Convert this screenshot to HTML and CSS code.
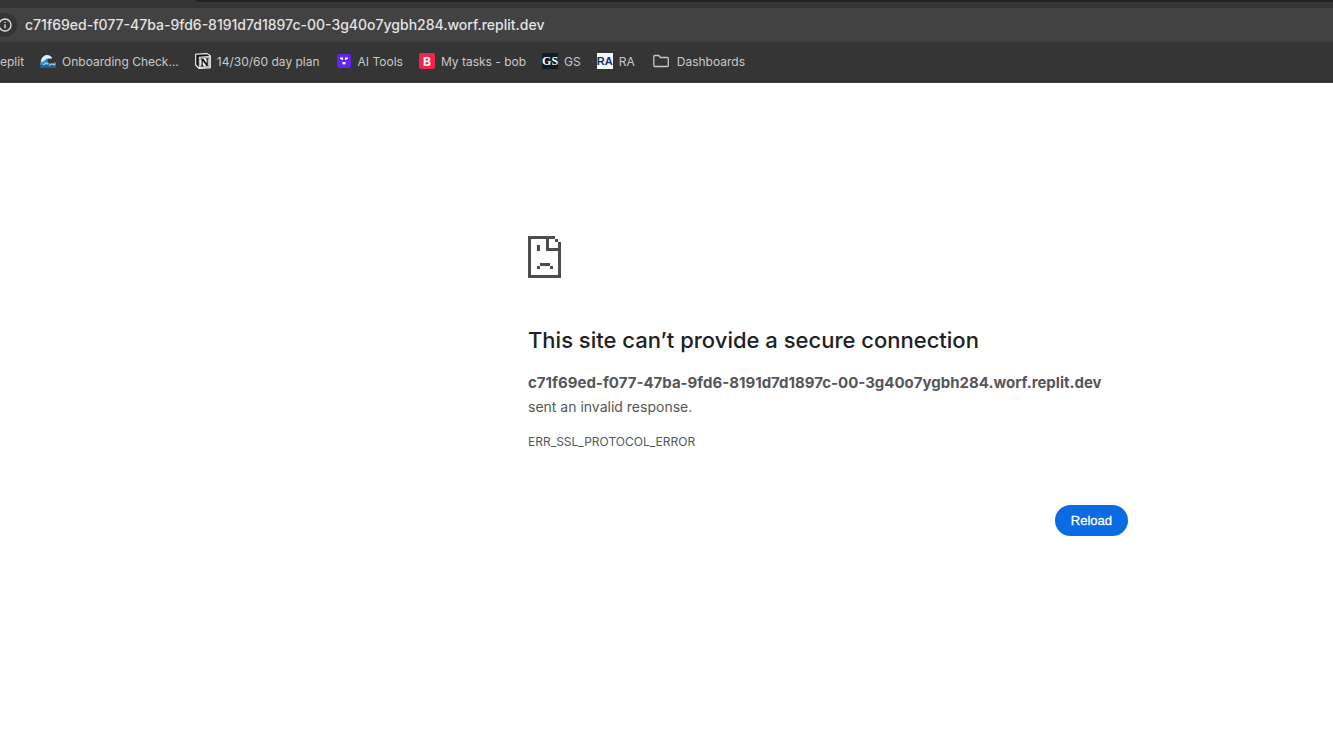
FILE: index.html
```
<!DOCTYPE html>
<html lang="en">
<head>
<meta charset="utf-8">
<title>c71f69ed-f077-47ba-9fd6-8191d7d1897c-00-3g40o7ygbh284.worf.replit.dev</title>
<link rel="stylesheet" href="styles.css">
</head>
<body>
<header class="browser">
  <div class="tabstrip"><div class="tabs"></div></div>
  <form class="toolbar">
    <button class="info" type="button" aria-label="Site information"><svg width="14" height="14" viewBox="0 0 14 14" fill="none" stroke="#dedede" stroke-width="1.4"><circle cx="7" cy="7" r="6"/><path d="M7 6.2v4M7 3.7v1.4"/></svg></button>
    <input class="address" aria-label="Address" value="c71f69ed-f077-47ba-9fd6-8191d7d1897c-00-3g40o7ygbh284.worf.replit.dev">
  </form>
  <nav class="bookmarks" aria-label="Bookmarks">
    <a href="#">eplit</a>
    <a href="#"><svg width="16" height="16" viewBox="0 0 16 16">
      <path d="M0 13C0 7 3 2 7 2c3 0 5 2 5 4-1-1-2-1-3-.5C7 6 7 9 9 10c2 1 4-1 7-.5V15H0z" fill="#3f8fc4"/>
      <path d="M1 9c0-4 3-7 6-7 2 0 4 1 5 3l-1 1-1-1-1 1-1-1-1 1-1-.5-1 2-1-.5-1 2-1-.5z" fill="#dff2fb"/>
      <path d="M0 12c3-1 5 1 8 0s5-1 8 0v3H0z" fill="#1f609c"/>
      <path d="M3 12l3-2 2 1M9 12.500l3-1.500 3 1" fill="none" stroke="#b9def0"/></svg>Onboarding Check...</a>
    <a href="#"><svg width="16" height="16" viewBox="0 0 16 16">
      <path d="M.7 1.300L12 .6l3.300 2.200v12L4 15.400.7 12z" fill="#111" stroke="#fff" stroke-width="1.100" stroke-linejoin="round"/>
      <path d="M3.800 3.800l11-.7v11.400l-11 .7z" fill="#fff"/>
      <path d="M4.800 4.800l9-.6v9.300l-9 .6z" fill="#fff" stroke="#111" stroke-width=".4"/>
      <path d="M5.700 5.500h2.700l3.200 4.800V6.200l-1-.2V5.300h3V6l-.8.3v6.700h-1.400L7.800 8v4.400l1.100.3v.7H5.700v-.7l.8-.3V6.500l-.8-.2z" fill="#111"/></svg>14/30/60 day plan</a>
    <a href="#"><svg width="16" height="16" viewBox="0 0 16 16">
      <rect x="1" y="1" width="14" height="14" rx="2" fill="#6425ee"/>
      <g fill="#fff"><path d="M4 4.500h3V7H5.500V6H4zM12 4.500H9V7h1.500V6H12z"/><path d="M6.500 9h3v1.500q0 1-1.500 1t-1.500-1z"/></g></svg>AI Tools</a>
    <a href="#"><span class="favicon red" aria-hidden="true">B</span>My tasks - bob</a>
    <a href="#"><span class="favicon navy" aria-hidden="true">GS</span>GS</a>
    <a href="#"><span class="favicon pale" aria-hidden="true">RA</span>RA</a>
    <a class="folder" href="#"><svg width="16" height="14" viewBox="0 0 16 14" fill="none" stroke="#c7c7c7" stroke-width="1.300"><path d="M.8 11.500v-9q0-1 1-1h4l1.500 2h7q1 0 1 1v7q0 1-1 1H1.800q-1 0-1-1z"/></svg>Dashboards</a>
  </nav>
</header>
<main class="error">
  <svg class="sad" width="33" height="42" viewBox="0 0 33 42" fill="#4d4d4d" shape-rendering="crispEdges" aria-hidden="true">
    <path d="M0 0h27v3h-6v9h12v30H0zM3 3v36h27V15H18V3zM27 3h3v3h-3zM30 6h3v6h-3zM9 9h3v6H9zM12 27h10v3H12zM9 30h3v3H9zM22 30h3v3h-3z" fill-rule="evenodd"/></svg>
  <h1>This site can’t provide a secure connection</h1>
  <p class="message"><strong>c71f69ed-f077-47ba-9fd6-8191d7d1897c-00-3g40o7ygbh284.worf.replit.dev</strong> sent an invalid response.</p>
  <p class="code">ERR_SSL_PROTOCOL_ERROR</p>
  <div class="actions"><button class="reload" type="button">Reload</button></div>
</main>
</body>
</html>
```
FILE: styles.css
```
body {
  margin: 0;
  font-family: Inter, "Liberation Sans", sans-serif;
  background: #fff;
  color: #55565a;
}

.browser {
  background: #353535;
  color: #c9c9c9;
}

.tabstrip {
  height: 8px;
  padding-left: 196px;
}

.tabs {
  height: 2px;
  background: #202020;
  border-bottom-left-radius: 4px;
}

.toolbar {
  display: flex;
  align-items: center;
  gap: 8px;
  height: 34px;
  margin: 0;
  background: #424242;
}

.info {
  display: flex;
  justify-content: flex-end;
  width: 17px;
  padding: 5px;
  box-sizing: border-box;
  border: 0;
  border-radius: 0 12px 12px 0;
  background: #353535;
}

.info svg {
  flex: none;
}

.address {
  flex: 1;
  min-width: 0;
  height: 32px;
  padding: 0 0 2px;
  box-sizing: border-box;
  border: 0;
  background: none;
  color: #e3e3e3;
  font: 500 14px Inter, sans-serif;
}

.bookmarks {
  display: flex;
  align-items: center;
  gap: 16px;
  height: 38px;
  padding-bottom: 2px;
  border-bottom: 1px solid #414141;
  font-size: 12px;
  white-space: nowrap;
}

.bookmarks a {
  display: flex;
  align-items: center;
  gap: 6px;
  color: inherit;
  text-decoration: none;
}

.bookmarks .folder {
  gap: 8px;
  padding-left: 2px;
}

.favicon {
  display: flex;
  align-items: center;
  justify-content: center;
  width: 16px;
  height: 16px;
  overflow: hidden;
  font-weight: 700;
}

.red {
  border-radius: 2px;
  background: #f0244c;
  color: #fff;
}

.navy {
  background: #101a28;
  color: #fff;
  font-family: "Liberation Serif", serif;
}

.pale {
  background: #f3f6fc;
  color: #1c2c58;
  font-family: "Liberation Sans", sans-serif;
  font-size: 11px;
}

.error {
  max-width: 600px;
  margin: 153px 205px 0 auto;
}

.sad {
  display: block;
}

h1 {
  margin: 46px 0 15px;
  color: #202124;
  font-size: 22px;
  font-weight: 500;
  line-height: 32px;
}

.message {
  margin: 0;
  font-size: 14px;
  line-height: 24px;
}

.message strong {
  font-size: 15px;
}

.code {
  margin: 14px 0 0;
  font-size: 12px;
  line-height: 18px;
}

.actions {
  display: flex;
  justify-content: flex-end;
  margin-top: 54px;
}

.reload {
  height: 31px;
  padding: 0 16px;
  border: 0;
  border-radius: 16px;
  background: #0b6be3;
  color: #fff;
  font: 500 13px "Liberation Sans", sans-serif;
  -webkit-text-stroke: 0.3px #fff;
}
```
